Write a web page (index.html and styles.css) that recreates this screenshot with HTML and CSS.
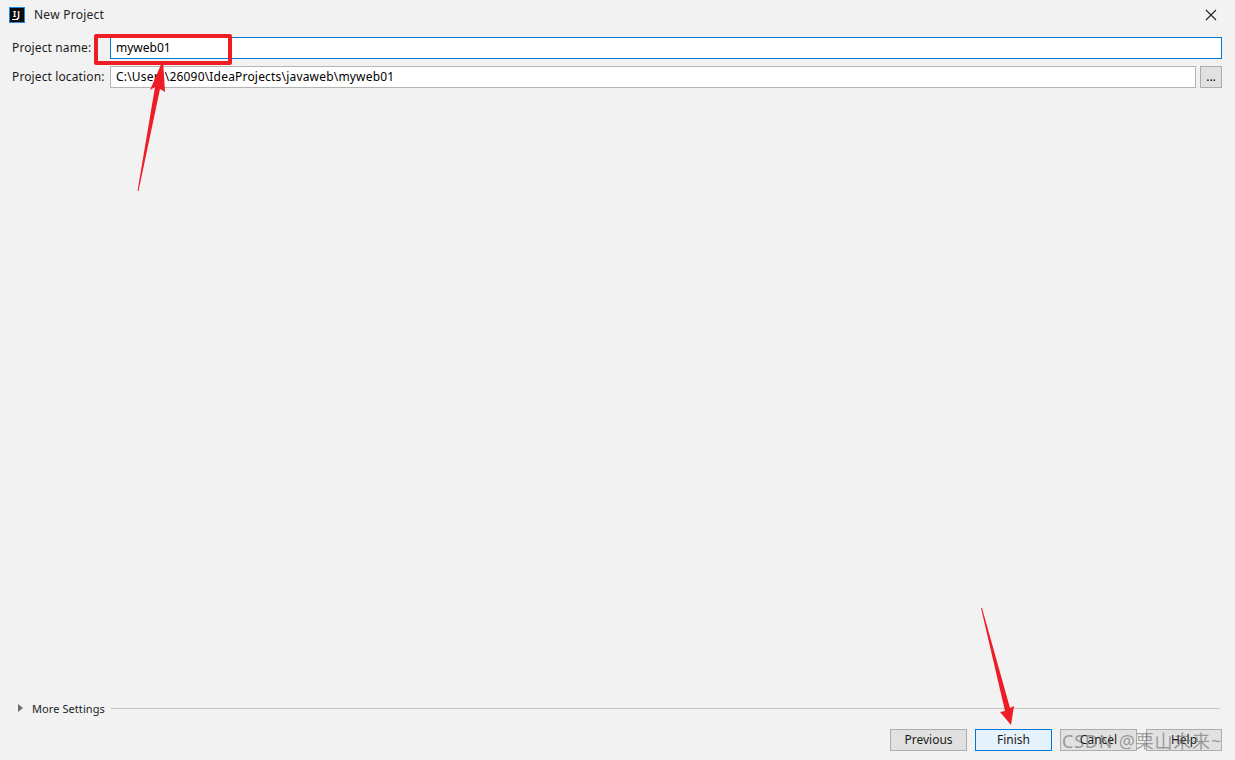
FILE: index.html
```html
<!DOCTYPE html>
<html lang="en">
<head>
    <meta charset="UTF-8">
    <title>New Project</title>
    <link rel="stylesheet" href="styles.css">
</head>
<body>
    <div class="dialog">
        <div class="title-bar">
            <div class="app-icon">
                <span class="app-icon-text">IJ</span>
                <span class="app-icon-bar"></span>
            </div>
            <span class="title">New Project</span>
            <svg class="close" width="12" height="12" viewBox="0 0 12 12">
                <path d="M1 1 L11 11 M11 1 L1 11" stroke="#222" stroke-width="1.1" fill="none"/>
            </svg>
        </div>

        <div class="form">
            <div class="form-row">
                <label class="form-label">Project name:</label>
                <div class="field field-active">myweb01</div>
            </div>
            <div class="form-row">
                <label class="form-label">Project location:</label>
                <div class="field field-path">C:\Users\26090\IdeaProjects\javaweb\myweb01</div>
                <button class="browse">...</button>
            </div>
        </div>

        <div class="more-settings">
            <span class="triangle"></span>
            <span class="more-label">More Settings</span>
            <span class="more-line"></span>
        </div>

        <div class="buttons">
            <button class="btn">Previous</button>
            <button class="btn btn-default">Finish</button>
            <button class="btn">Cancel</button>
            <button class="btn btn-help">Help</button>
        </div>
    </div>

    <!-- annotations drawn on top of the screenshot -->
    <div class="red-box"></div>
    <svg class="arrows" width="1235" height="760" viewBox="0 0 1235 760">
        <polygon points="163,60 165,92 160,89 138.5,191 137.5,191 155,87 150,90" fill="#ee1c25"/>
        <polygon points="1011,725 1000,712 1005,711 981,608 982,608 1010,708 1014,706" fill="#ee1c25"/>
    </svg>
    <div class="watermark">CSDN @栗山未来~</div>
</body>
</html>
```

FILE: styles.css
```css
html, body {
    margin: 0;
    height: 100%;
}
body {
    background: #f2f2f2;
    color: #000;
    font-family: 'Noto Sans', 'Noto Sans CJK SC', sans-serif;
    font-size: 12px;
    overflow: hidden;
}
.dialog {
    display: flex;
    flex-direction: column;
    height: 760px;
}
.title-bar {
    display: flex;
    align-items: center;
    height: 30px;
    padding: 0 18px 0 9px;
    flex: none;
}
.app-icon {
    position: relative;
    width: 16px;
    height: 16px;
    box-sizing: border-box;
    background: #0c0c0c;
    border: 1px solid #1e88e5;
    color: #fff;
}
.app-icon-text {
    display: block;
    font-size: 8px;
    line-height: 9px;
    font-weight: 700;
    text-align: center;
    letter-spacing: 1px;
    padding-top: 1px;
}
.app-icon-bar {
    display: block;
    width: 6px;
    height: 1px;
    margin: 1px 0 0 2px;
    background: #fff;
}
.title {
    margin-left: 9px;
    padding-bottom: 2px;
    flex: 1;
    color: #222;
    letter-spacing: 0.25px;
}
.form {
    display: flex;
    flex-direction: column;
    gap: 7px;
    padding: 7px 13px 0 12px;
}
.form-row {
    display: flex;
    align-items: center;
    height: 22px;
}
.form-label {
    width: 98px;
    flex: none;
    padding-bottom: 2px;
    color: #1c1c1c;
    letter-spacing: 0.12px;
}
.field {
    flex: 1;
    height: 22px;
    box-sizing: border-box;
    padding-left: 5px;
    background: #fff;
    border: 1px solid #b4b4b4;
    line-height: 20px;
}
.field-active {
    border-color: #0078d7;
}
.field-path {
    letter-spacing: 0.19px;
}
.browse {
    width: 22px;
    height: 22px;
    margin-left: 4px;
    padding: 0;
    background: #e1e1e1;
    border: 1px solid #adadad;
    font-family: inherit;
    font-size: 12px;
    line-height: 18px;
}
.more-settings {
    display: flex;
    align-items: center;
    gap: 9px;
    margin-top: auto;
    margin-bottom: 1px;
    padding: 0 15px 0 18px;
    height: 16px;
}
.triangle {
    width: 0;
    height: 0;
    border-left: 5px solid #6e6e6e;
    border-top: 4px solid transparent;
    border-bottom: 4px solid transparent;
}
.more-label {
    color: #222;
    font-size: 11px;
    letter-spacing: 0.08px;
}
.more-line {
    flex: 1;
    height: 1px;
    margin-left: -3px;
    background: #c4c4c4;
}
.buttons {
    display: flex;
    justify-content: flex-end;
    gap: 8px;
    padding: 12px 13px 0 0;
    height: 31px;
}
.btn {
    width: 77px;
    height: 22px;
    padding: 0 0 2px;
    background: #e1e1e1;
    border: 1px solid #adadad;
    color: #1a1a1a;
    font-family: inherit;
    font-size: 12px;
}
.btn-default {
    background: #e5f1fb;
    border-color: #0078d7;
}
.btn-help {
    width: 76px;
    margin-left: 1px;
}
.red-box {
    position: absolute;
    left: 94px;
    top: 34px;
    width: 138px;
    height: 31px;
    box-sizing: border-box;
    border: 4px solid #ee1c25;
    border-radius: 2px;
}
.arrows {
    position: absolute;
    left: 0;
    top: 0;
}
.watermark {
    position: absolute;
    right: 13px;
    top: 729px;
    color: rgba(90, 90, 90, 0.55);
    font-size: 18px;
    line-height: 24px;
    letter-spacing: 0.8px;
    white-space: nowrap;
}
```
